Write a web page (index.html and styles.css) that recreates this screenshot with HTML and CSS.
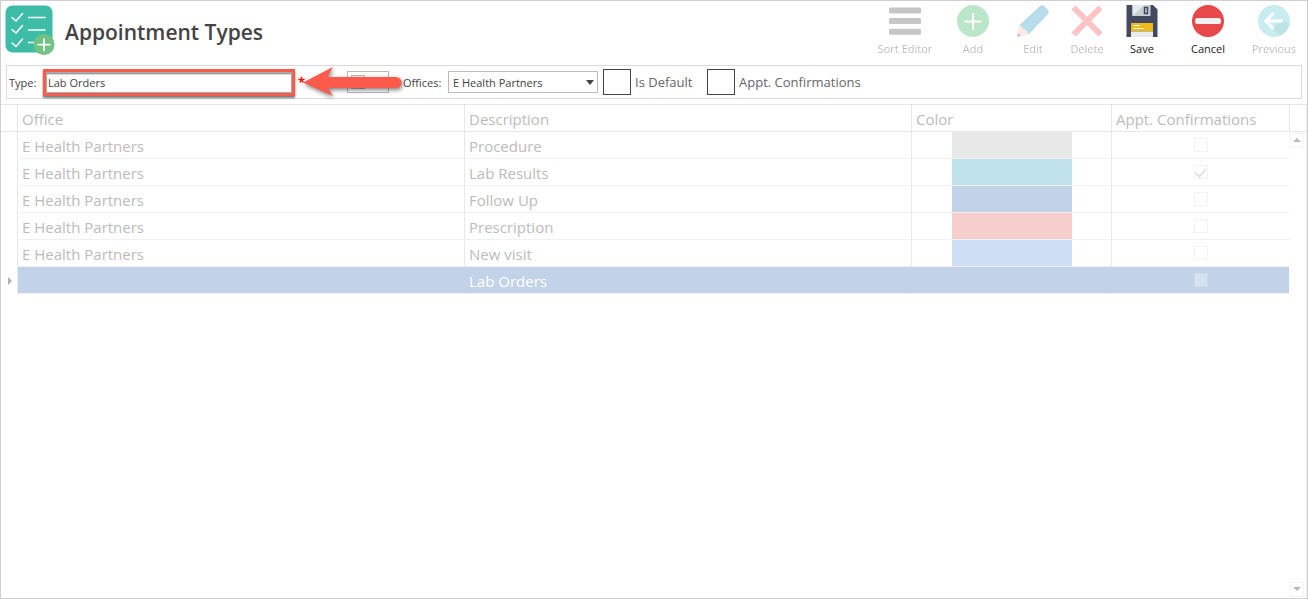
FILE: index.html
```
<!DOCTYPE html>
<html lang="en">
<head>
    <meta charset="UTF-8">
    <meta name="viewport" content="width=device-width, initial-scale=1.0">
    <title>Appointment Types</title>
    <link rel="stylesheet" href="styles.css">
</head>
<body>
    <div class="window">
        <header class="header">
            <svg class="logo" width="50" height="50" viewBox="0 0 50 50" aria-hidden="true">
                <rect x="0.500" y="0.500" width="47" height="47" rx="7" fill="#3dbda7"/>
                <g fill="none" stroke="#fff" stroke-width="1.6" stroke-linecap="round" stroke-linejoin="round">
                    <path d="M7 12.5l4 3.5 6.500-7.500M7 24.500l4 3.500 6.500-7.500M7 38l4 3.500 6.500-7.500"/>
                    <path d="M23.500 12.500H40M23.500 25H40M23.500 37.500H30"/>
                </g>
                <circle cx="39" cy="39.500" r="10.500" fill="#71c285"/>
                <path d="M39 34v11.500M33.200 39.700h11.600" fill="none" stroke="#fff" stroke-width="1.700" stroke-linecap="round"/>
            </svg>
            <h1>Appointment Types</h1>
            <div class="toolbar">
                <button type="button" class="tool tool-sort" disabled>
                    <svg width="32" height="32" viewBox="0 0 32 32" aria-hidden="true">
                        <g fill="#444"><rect y="2.500" width="32" height="6" rx="1.500"/><rect y="13" width="32" height="6" rx="1.500"/><rect y="23.700" width="32" height="6" rx="1.500"/></g>
                    </svg>
                    Sort Editor
                </button>
                <button type="button" class="tool tool-add" disabled>
                    <svg width="32" height="32" viewBox="0 0 32 32" aria-hidden="true">
                        <circle cx="16" cy="16" r="16" fill="#25ae54"/>
                        <path d="M16 8v17M7.500 16.500h17" stroke="#fff" stroke-width="2"/>
                    </svg>
                    Add
                </button>
                <button type="button" class="tool tool-edit" disabled>
                    <svg width="32" height="32" viewBox="0 0 32 32" aria-hidden="true">
                        <path d="M2 20.500L22.500 1.500q2.500-2.500 5 0l3 3q2.500 2.500 0 5L11.500 29.500z" fill="#0d8cb8"/>
                        <path d="M4.500 23L25 3l4.500 4.500L9.500 27.500z" fill="#1a94bf"/>
                        <path d="M0 32l2-11.500q3-.5 4 3.500 4 .5 5.500 5.500z" fill="#f9bfa6"/>
                        <path d="M0 32l.8-4q2.200.8 3 3z" fill="#35495e"/>
                    </svg>
                    Edit
                </button>
                <button type="button" class="tool tool-delete" disabled>
                    <svg width="32" height="32" viewBox="0 0 32 32" aria-hidden="true">
                        <path d="M2.500 2.500l27 27M29.500 2.500l-27 27" stroke="#ff3b43" stroke-width="6"/>
                    </svg>
                    Delete
                </button>
                <button type="button" class="tool tool-save">
                    <svg width="32" height="32" viewBox="0 0 32 32" aria-hidden="true">
                        <path d="M.5 0H27l4.500 4.500V32H.5z" fill="#434a60"/>
                        <path d="M6.500 0h18v11h-18z" fill="#c9d0d3"/>
                        <path d="M6.500 0h12l-12 11z" fill="#e6ecee"/>
                        <path d="M18.500 2.500h3v6h-3z" fill="#c7cfd3" stroke="#434a60" stroke-width="1.500"/>
                        <path d="M5 18h22v8.500H5z" fill="#efb91a"/>
                        <path d="M5 26.500h22V32H5z" fill="#e6ecee"/>
                        <path d="M7.500 20.500h6M7.500 23.500h10" stroke="#fff" stroke-width="1.200"/>
                    </svg>
                    Save
                </button>
                <button type="button" class="tool tool-cancel">
                    <svg width="32" height="32" viewBox="0 0 32 32" aria-hidden="true">
                        <circle cx="16" cy="16" r="16" fill="#e9484b"/>
                        <rect x="3" y="13" width="26" height="6" rx="2.500" fill="#f1f1f1"/>
                    </svg>
                    Cancel
                </button>
                <button type="button" class="tool tool-previous" disabled>
                    <svg width="32" height="32" viewBox="0 0 32 32" aria-hidden="true">
                        <circle cx="16" cy="16" r="16" fill="#4cc3cd"/>
                        <path d="M14 23l8 7.500a16 16 0 0 0 9.500-11L25 15z" fill="#2ba3b0"/>
                        <path d="M15.500 8L8 16l7.500 8M8.500 16H25" fill="none" stroke="#fff" stroke-width="3.200"/>
                    </svg>
                    Previous
                </button>
            </div>
        </header>

        <form class="filters">
            <label class="type-label" for="type">Type:</label>
            <div class="type-box">
                <input type="text" id="type" value="Lab Orders" required>
            </div>
            <span class="required">*</span>
            <div class="color-field">
                <button type="button" class="color-picker" aria-label="Color"><span></span></button>
                <svg class="arrow" width="104" height="36" viewBox="0 0 104 36" aria-hidden="true">
                    <path d="M1 15.500L31 0l-5.500 10H94a5.500 5.500 0 0 1 0 11H25.500L31 29z" fill="#fe5a4c"/>
                </svg>
            </div>
            <label class="office-label" for="office">Offices:</label>
            <div class="select-box">
                <select id="office">
                    <option>E Health Partners</option>
                </select>
            </div>
            <label class="check check-default"><input type="checkbox">Is Default</label>
            <label class="check"><input type="checkbox">Appt. Confirmations</label>
        </form>

        <main class="grid">
            <table>
                <colgroup>
                    <col class="col-marker">
                    <col>
                    <col>
                    <col class="col-color">
                    <col class="col-appt">
                </colgroup>
                <thead>
                    <tr><th></th><th>Office</th><th>Description</th><th>Color</th><th>Appt. Confirmations</th></tr>
                </thead>
                <tbody>
                    <tr>
                        <td></td><td>E Health Partners</td><td>Procedure</td>
                        <td><div class="swatch gray"></div></td>
                        <td><input type="checkbox" aria-label="Procedure confirmations" disabled></td>
                    </tr>
                    <tr>
                        <td></td><td>E Health Partners</td><td>Lab Results</td>
                        <td><div class="swatch teal"></div></td>
                        <td><input type="checkbox" aria-label="Lab Results confirmations" checked disabled></td>
                    </tr>
                    <tr>
                        <td></td><td>E Health Partners</td><td>Follow Up</td>
                        <td><div class="swatch blue"></div></td>
                        <td><input type="checkbox" aria-label="Follow Up confirmations" disabled></td>
                    </tr>
                    <tr>
                        <td></td><td>E Health Partners</td><td>Prescription</td>
                        <td><div class="swatch red"></div></td>
                        <td><input type="checkbox" aria-label="Prescription confirmations" disabled></td>
                    </tr>
                    <tr>
                        <td></td><td>E Health Partners</td><td>New visit</td>
                        <td><div class="swatch sky"></div></td>
                        <td><input type="checkbox" aria-label="New visit confirmations" disabled></td>
                    </tr>
                    <tr class="selected">
                        <td><div class="marker"></div></td><td></td><td>Lab Orders</td>
                        <td></td>
                        <td><input type="checkbox" aria-label="Lab Orders confirmations" disabled></td>
                    </tr>
                </tbody>
            </table>
            <div class="scrollbar">
                <button type="button" class="scroll-up" aria-label="Scroll up" disabled></button>
                <button type="button" class="scroll-down" aria-label="Scroll down" disabled></button>
            </div>
        </main>
    </div>
</body>
</html>
```
FILE: styles.css
```
* {
    box-sizing: border-box;
}
body {
    margin: 0;
    font-family: "Open Sans", "Noto Sans", sans-serif;
    font-size: 11px;
    color: #444;
    background: #fff;
}
button, input, select {
    font: inherit;
    color: inherit;
    margin: 0;
    padding: 0;
}
.window {
    display: flex;
    flex-direction: column;
    min-height: 100vh;
    border: 1px solid #cfcfcf;
}

/* header */
.header {
    display: flex;
    align-items: flex-start;
    height: 64px;
    padding: 4px 4px 0 4px;
}
.logo {
    flex: none;
}
h1 {
    margin: 12px 0 0 10px;
    font-size: 21px;
    line-height: 30px;
    font-weight: 600;
    white-space: nowrap;
}
.toolbar {
    display: flex;
    margin-left: auto;
}
.tool {
    display: flex;
    flex-direction: column;
    align-items: center;
    gap: 4px;
    border: 0;
    background: none;
    line-height: 16px;
    white-space: nowrap;
    color: #222;
}
.tool:disabled {
    opacity: 0.3;
}
.tool-sort { width: 72px; }
.tool-add { width: 64px; }
.tool-edit { width: 56px; }
.tool-delete { width: 52px; }
.tool-save { width: 58px; }
.tool-cancel { width: 74px; }
.tool-previous { width: 58px; }

/* filter bar */
.filters {
    display: flex;
    align-items: center;
    height: 34px;
    margin: 0 5px;
    padding-left: 2px;
    border: 1px solid #dadada;
}
.type-label {
    width: 34px;
}
.type-box {
    width: 252px;
    height: 27px;
    border: 3px solid #f75b4d;
    box-shadow: 0 2px 2px #777, inset 0 2px 2px #777;
}
.type-box input {
    width: 100%;
    height: 21px;
    padding: 0 1px;
    border: 1px solid #ababab;
    background: none;
    outline: none;
}
.required {
    width: 11px;
    margin-left: 3px;
    font-size: 13px;
    color: #f00;
    font-weight: 700;
}
.color-field {
    position: relative;
    width: 94px;
    padding-left: 38px;
}
.color-picker {
    display: block;
    width: 42px;
    height: 22px;
    padding: 3px;
    border: 1px solid #bbb;
    background: #fff;
}
.color-picker span {
    display: block;
    width: 14px;
    height: 14px;
    border: 1px solid #bbb;
    background: #eee;
}
.arrow {
    position: absolute;
    left: -7px;
    top: -4px;
    filter: drop-shadow(1px 2px 2px rgba(0, 0, 0, 0.5));
}
.office-label {
    width: 45px;
}
.select-box {
    position: relative;
    width: 150px;
}
.select-box select {
    display: block;
    width: 100%;
    height: 22px;
    padding: 0 4px;
    border: 1px solid #bbb;
    border-radius: 0;
    background: #fff;
    appearance: none;
}
.select-box::after {
    content: "";
    position: absolute;
    right: 4px;
    top: 9px;
    border: 4px solid transparent;
    border-top: 5px solid #444;
    border-bottom: 0;
}
.check {
    display: flex;
    align-items: center;
    gap: 4px;
    margin-left: 5px;
    font-size: 13px;
    color: #666;
    white-space: nowrap;
}
.check-default {
    width: 99px;
}
.check input {
    appearance: none;
    width: 28px;
    height: 26px;
    border: 1px solid #444;
    background: #fff;
}

/* appointment types list */
.grid {
    display: flex;
    flex: 1;
    margin-top: 5px;
    border-top: 1px solid #e6e6e6;
}
table {
    flex: 1;
    align-self: flex-start;
    table-layout: fixed;
    width: 0;
    border-spacing: 0;
    font-size: 15px;
    color: #bcbcbc;
}
.col-marker { width: 17px; }
.col-color { width: 200px; }
.col-appt { width: 178px; }
th, td {
    height: 27px;
    padding: 2px 4px 0;
    border-right: 1px solid #e6e8ec;
    border-bottom: 1px solid #f1f1f1;
    font-weight: 400;
    line-height: 24px;
    text-align: left;
    white-space: nowrap;
}
th {
    border-color: #e6e6e6;
}
td:first-child {
    padding: 0;
    border-bottom-color: transparent;
}
td:nth-child(4) {
    padding: 0;
}
td:last-child {
    padding: 0;
    border-right-color: #fff;
    text-align: center;
}
th:first-child {
    padding: 0;
}
.swatch {
    width: 120px;
    height: 26px;
    margin-left: 40px;
}
.gray { background: #e8e8e8; }
.teal { background: #bfe2ea; }
.blue { background: #c2d2e8; }
.red { background: #f6cece; }
.sky { background: #cedff5; }
td input {
    display: block;
    appearance: none;
    width: 14px;
    height: 14px;
    margin: 0 auto;
    border: 1px solid #f3f3f3;
}
td input:checked::after {
    content: "";
    display: block;
    width: 5px;
    height: 9px;
    margin: 0 auto;
    border: solid #e2e2e2;
    border-width: 0 2px 2px 0;
    transform: rotate(40deg);
}
.selected td:not(:first-child) {
    background: #c2d2e8;
    border-right-color: #c2d2e8;
    color: #fff;
}
.selected td:last-child:not(:first-child) {
    border-right-color: #fff;
}
.selected input {
    border-color: #cddbe9;
    background: #d6e2ed;
}
.marker {
    margin: 2px 0 0 7px;
    width: 0;
    border: 4px solid transparent;
    border-left-color: #b0b0b0;
    border-right: 0;
}
.scrollbar {
    display: flex;
    flex-direction: column;
    justify-content: space-between;
    width: 17px;
    padding: 28px 2px 1px 0;
    border-right: 1px solid #ececec;
    background: linear-gradient(#e6e6e6, #e6e6e6) 0 26px / 100% 1px no-repeat;
}
.scrollbar button {
    display: flex;
    align-items: center;
    justify-content: center;
    height: 15px;
    border: 1px solid #f3f3f3;
    background: #fff;
}
.scrollbar button::after {
    content: "";
    border: 4px solid transparent;
}
.scrollbar .scroll-up::after {
    margin-bottom: 6px;
    border-bottom-color: #b8b8b8;
}
.scrollbar .scroll-down::after {
    margin-top: 2px;
    border-top-color: #b8b8b8;
}
```
